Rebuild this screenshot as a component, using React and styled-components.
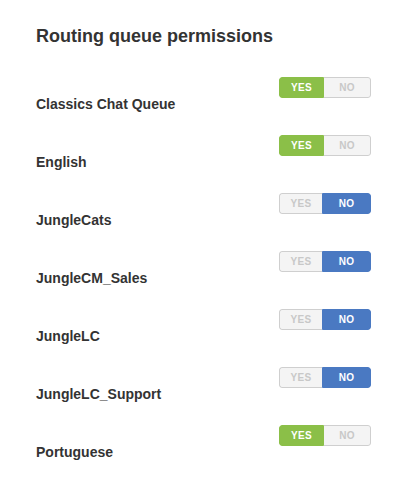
import React from 'react'
import styled, { createGlobalStyle } from 'styled-components'

const GlobalStyle = createGlobalStyle`
  body {
    margin: 0;
    background: #ffffff;
    font-family: "Liberation Sans", Arial, sans-serif;
  }
`

const Container = styled.div`
  display: flex;
  flex-direction: column;
  padding: 26px 40px 0 36px;
`

const Title = styled.h2`
  margin: 0 0 31px 0;
  font-size: 18px;
  line-height: 20px;
  font-weight: 700;
  color: #333333;
`

const Row = styled.div`
  display: flex;
  justify-content: space-between;
  align-items: flex-start;
  height: 58px;
`

const Label = styled.div`
  padding-top: 17px;
  font-size: 14px;
  line-height: 20px;
  font-weight: 700;
  color: #333333;
`

const Toggle = styled.div`
  display: flex;
  width: 92px;
  height: 21px;
  border-radius: 3px;
  overflow: hidden;
  box-sizing: border-box;
`

const Segment = styled.div`
  display: flex;
  align-items: center;
  justify-content: center;
  width: ${props => props.w}px;
  box-sizing: border-box;
  font-size: 10px;
  font-weight: 700;
  letter-spacing: 0.3px;
  background: ${props => props.on ? props.color : '#f4f4f4'};
  color: ${props => props.on ? '#ffffff' : '#c8c8c8'};
  border: 1px solid ${props => props.on ? props.color : '#cfcfcf'};
  border-radius: ${props => props.side === 'left' ? '3px 0 0 3px' : '0 3px 3px 0'};
  ${props => props.side === 'left' && !props.on ? 'border-right: none;' : ''}
  ${props => props.side === 'right' && !props.on ? 'border-left: none;' : ''}
`

const queues = [
  { name: 'Classics Chat Queue', allowed: true },
  { name: 'English', allowed: true },
  { name: 'JungleCats', allowed: false },
  { name: 'JungleCM_Sales', allowed: false },
  { name: 'JungleLC', allowed: false },
  { name: 'JungleLC_Support', allowed: false },
  { name: 'Portuguese', allowed: true },
]

export default function App() {
  return (
    <Container>
      <GlobalStyle />
      <Title>Routing queue permissions</Title>
      {queues.map(q => (
        <Row key={q.name}>
          <Label>{q.name}</Label>
          <Toggle>
            <Segment side="left" w={q.allowed ? 45 : 43} on={q.allowed} color="#8bbf48">YES</Segment>
            <Segment side="right" w={q.allowed ? 47 : 49} on={!q.allowed} color="#4a79c2">NO</Segment>
          </Toggle>
        </Row>
      ))}
    </Container>
  )
}
